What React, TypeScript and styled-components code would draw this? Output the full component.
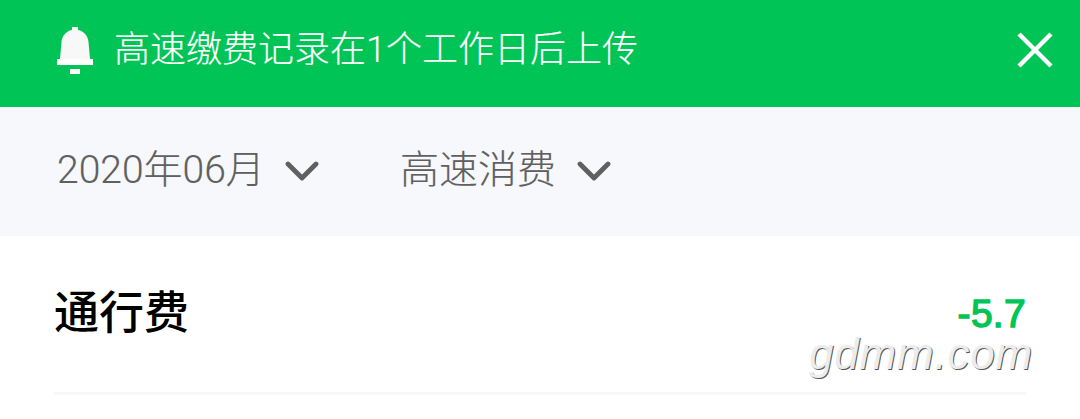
import React from "react";
import styled, { createGlobalStyle } from "styled-components";

const Global = createGlobalStyle`
  * { box-sizing: border-box; }
  body { margin: 0; background: #fff; font-family: Roboto, "Noto Sans CJK SC", sans-serif; }
`;
const Page = styled.main`
  position: relative; width: 1080px; height: 419px; overflow: hidden; background: #fff;
`;
const Notice = styled.header`
  display: flex; align-items: center; height: 107px; padding: 0 27px 8px 56px; background: #00c455; color: #fff;
`;
const Message = styled.span`
  flex: 1; margin-left: 20px; font: 300 36px/52px Roboto, "Noto Sans CJK SC", sans-serif; white-space: nowrap;
  -webkit-text-stroke: 0.15px;
`;
const Filters = styled.nav`
  display: flex; align-items: center; height: 129px; padding: 0 56px 4px 57px; background: #f7f8fc;
`;
const Filter = styled.button<{ $width: number }>`
  display: flex; align-items: center; width: ${p => p.$width}px; padding: 0; border: 0; background: none; color: #606060;
  font: 300 39px/56px Roboto, "Noto Sans CJK SC", sans-serif; white-space: nowrap;
  -webkit-text-stroke: 0.15px;
  svg { margin: 2px 0 0 20.5px; }
`;
const Row = styled.section`
  display: flex; justify-content: space-between; align-items: center; height: 159px; margin: 0 54px; border-bottom: 3px solid #f7f7f7;
`;
const Title = styled.h1`
  margin: 0 0 8px; font: 500 45px/64px "Noto Sans CJK SC", sans-serif; color: #000;
`;
const Amount = styled.strong`
  font: 400 39px/50px "Liberation Sans", sans-serif; color: #00c455; -webkit-text-stroke: 1.4px;
  letter-spacing: 0.3px;
`;
const Watermark = styled.span`
  position: absolute; left: 809px; top: 326px; font: italic 400 44px/56px "Liberation Sans", sans-serif; color: #ececec;
  letter-spacing: 0.8px; text-shadow: 1px 1px 0.5px #555;
`;
const Chevron = () => <svg width="34" height="22" viewBox="0 0 34 22"><path d="M3 4 17 18 31 4" fill="none" stroke="#606060" strokeWidth="4.8" strokeLinecap="round" strokeLinejoin="round" /></svg>;

export default function App() {
  return <><Global /><Page>
    <Notice>
      <svg width="38" height="48" viewBox="0 0 38 48" fill="#fff"><path d="M16 1h6v3c6 1 10 6 10.500 12L34 33H4L5.500 16C6 10 10 5 16 4z" fill="#f8f8f8" /><path d="M1 33h36v6H1zM14 43h10v5H14z" /></svg>
      <Message>高速缴费记录在1个工作日后上传</Message>
      <svg width="36" height="36" viewBox="0 0 36 36"><path d="M2 2 34 34M34 2 2 34" stroke="#fff" strokeWidth="4.5" /></svg>
    </Notice>
    <Filters>
      <Filter $width={343}>2020年06月<Chevron /></Filter>
      <Filter $width={240}>高速消费<Chevron /></Filter>
    </Filters>
    <Row><Title>通行费</Title><Amount>-5.7</Amount></Row>
    <Watermark>gdmm.com</Watermark>
  </Page></>;
}
